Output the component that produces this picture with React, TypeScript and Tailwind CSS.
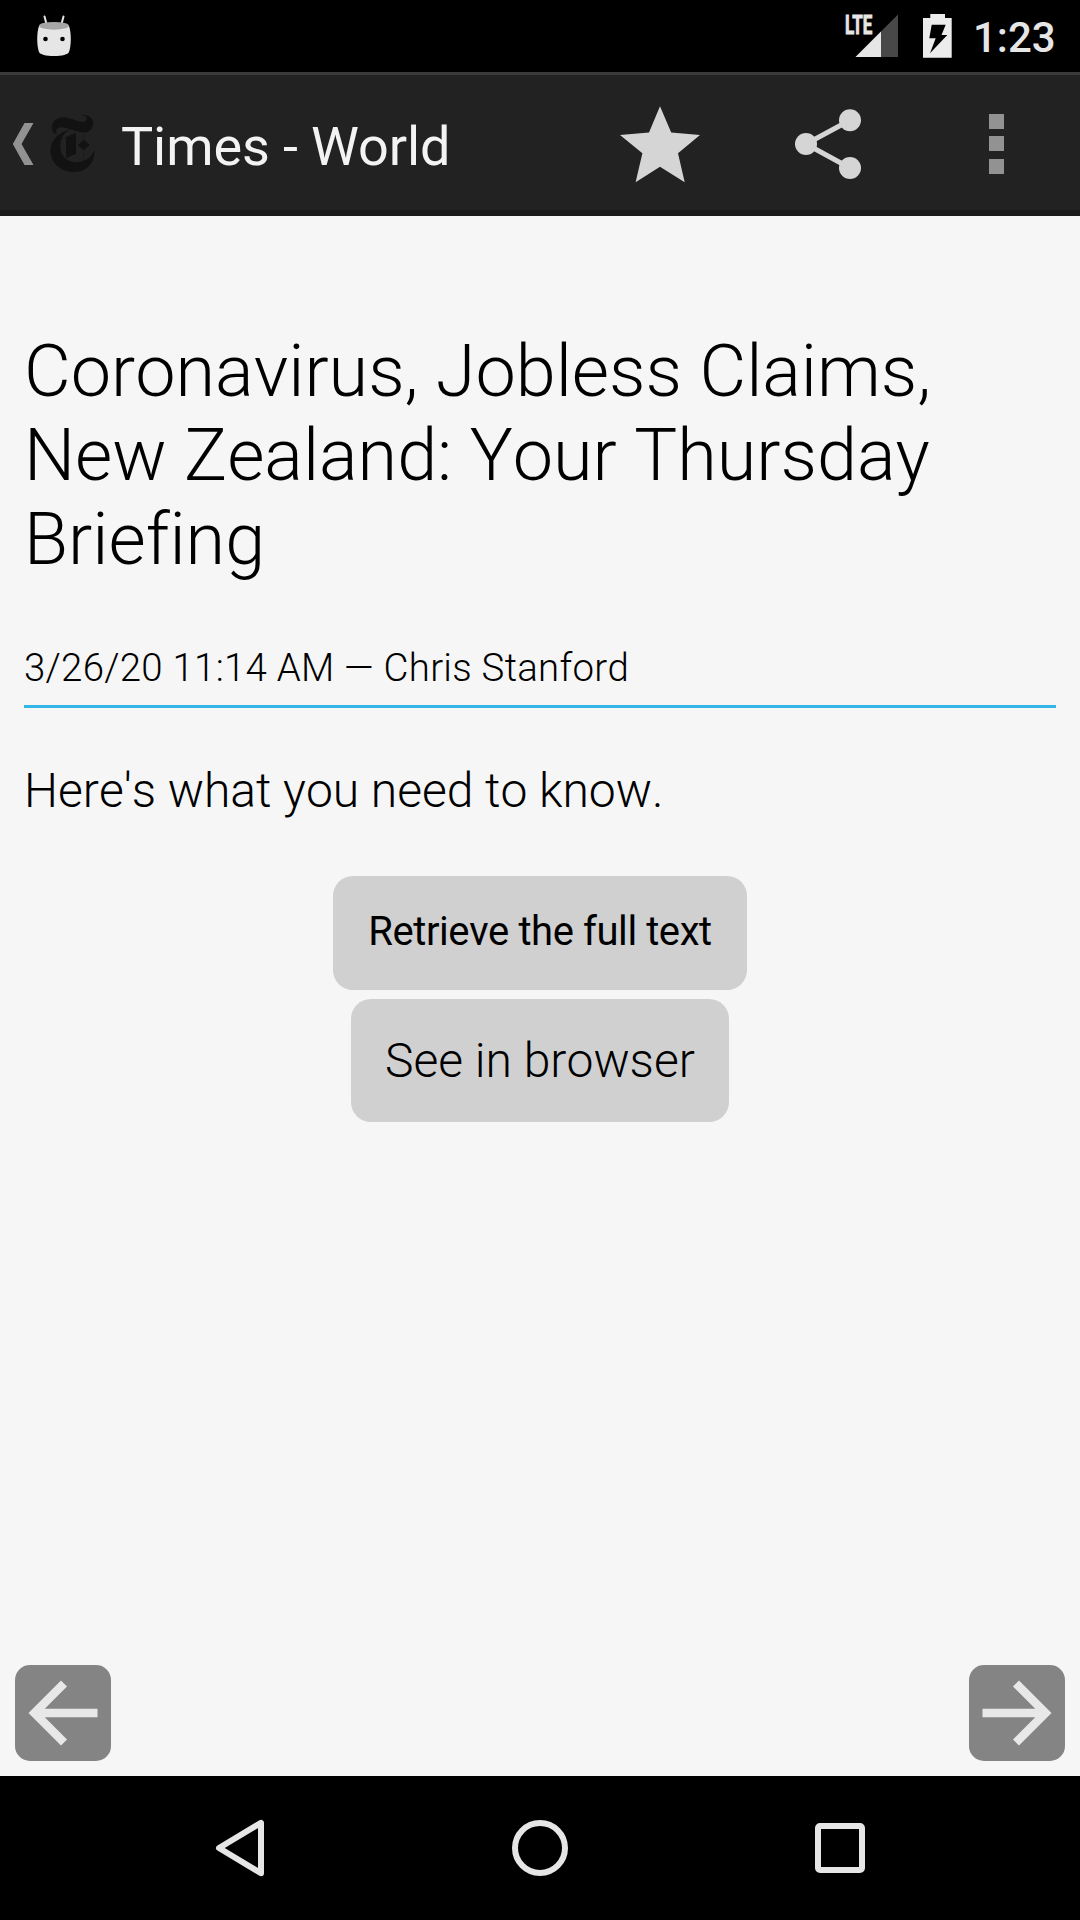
import React from "react";
import { SiNewyorktimes } from "react-icons/si";

function StatusBar() {
  return (
    <div className="flex h-[72px] items-center bg-black">
      <svg className="ml-9 h-[42px] w-9" viewBox="36 12 36 42">
        <path d="M44.5 13.5L46.5 21M63.5 13.5L61.5 21" stroke="#e6e6e6" strokeWidth="2" strokeLinecap="round" />
        <path d="M39 23C36.6 30 36.6 42 39 49C40 51.5 46 53 54 53C62 53 68 51.5 69 49C71.4 42 71.4 30 69 23Z" fill="#e6e6e6" />
        <ellipse cx="54" cy="22.8" rx="15" ry="3.9" fill="#a6a6a6" />
        <circle cx="45.5" cy="36" r="2.3" fill="#000" />
        <circle cx="62.5" cy="36" r="2.3" fill="#000" />
      </svg>
      <svg className="ml-auto h-[72px] w-[56px]" viewBox="844 0 56 72">
        <text x="845" y="33.5" fontFamily="Roboto" fontWeight="700" fontSize="26" fill="#e6e6e6" stroke="#e6e6e6" strokeWidth="0.9" textLength="27.4" lengthAdjust="spacingAndGlyphs">LTE</text>
        <path d="M898 14.5V57H855.5Z" fill="#484848" />
        <path d="M881 31.5V57H855.5Z" fill="#e6e6e6" />
      </svg>
      <svg className="ml-[23px] h-[44px] w-[29px]" viewBox="923 14 29 44">
        <path d="M930.3 14H945V18H951.7V57.7H923V18H930.3Z" fill="#ececec" />
        <path d="M931.7 24.7H945.7L941.5 35H947.3L930 53.3L935.7 38.3H929.3Z" fill="#000" />
      </svg>
      <span className="ml-[21px] mr-[25px] w-[82px] whitespace-nowrap pt-1 text-[42px] font-medium leading-[50px] text-[#e6e6e6]">1:23</span>
    </div>
  );
}

function ActionBar() {
  return (
    <header className="flex h-36 items-center border-t-[3px] border-b-[6px] border-t-[#3a3a3a] border-b-[#1a1a1a] bg-[#222222] pt-0.5">
      <svg className="ml-3 h-[42px] w-[22px] shrink-0" viewBox="12 123 22 42">
        <path d="M24.5 123H33.5L21.5 144L33.5 165H24.5L12.8 144Z" fill="#929292" />
      </svg>
      <SiNewyorktimes className="ml-[10px] h-[57px] w-[57px] shrink-0 text-[#121212]" />
      <h1 className="ml-[20px] whitespace-nowrap pt-[7px] text-[54px] leading-[64px] tracking-[-0.1px] text-[#f3f3f3]">Times - World</h1>
      <svg className="ml-auto h-[78px] w-[84px]" viewBox="618 105 84 78">
        <path d="M660 106.3L671.2 132.5L700 135L678 153.3L684.7 182.3L660 166.7L635.6 182.3L642.4 153.3L620 135L649 132.5Z" fill="#d5d5d5" />
      </svg>
      <svg className="ml-[92px] h-[74px] w-[70px]" viewBox="794 107 70 74">
        <path d="M850 120.3L806 144L850 168" fill="none" stroke="#d5d5d5" strokeWidth="5" />
        <circle cx="850" cy="120.3" r="11" fill="#d5d5d5" />
        <circle cx="806" cy="144" r="11" fill="#d5d5d5" />
        <circle cx="850" cy="168" r="11" fill="#d5d5d5" />
      </svg>
      <div className="ml-[125px] mr-[76px] flex h-[60px] w-[15px] flex-col justify-between">
        <i className="h-[15px] bg-[#929292]" />
        <i className="h-[15px] bg-[#929292]" />
        <i className="h-[15px] bg-[#929292]" />
      </div>
    </header>
  );
}

function ArrowButton({ flipped = false }: { flipped?: boolean }) {
  return (
    <button className="size-24 rounded-[15px] bg-[#848484]">
      <svg className={flipped ? "size-24 -scale-x-100" : "size-24"} viewBox="0 0 96 96">
        <path d="M82.5 48H20M49 18.5L19.5 48L49 77.5" fill="none" stroke="#e8e8e8" strokeWidth="8.5" />
      </svg>
    </button>
  );
}

function NavigationBar() {
  return (
    <nav className="flex h-36 items-center bg-black">
      <svg className="ml-[215px] h-[58px] w-[50px]" viewBox="215 1819 50 58">
        <path d="M261 1822.8V1873.2L219 1848Z" fill="none" stroke="#e6e6e6" strokeWidth="6" strokeLinejoin="round" />
      </svg>
      <i className="ml-[247px] size-14 rounded-full border-[6px] border-[#e6e6e6]" />
      <i className="ml-[247px] size-[50px] rounded-[5px] border-[6px] border-[#e6e6e6]" />
    </nav>
  );
}

export default function App() {
  return (
    <div className="flex h-[1920px] w-[1080px] flex-col overflow-hidden bg-[#f6f6f6] font-['Roboto',sans-serif] text-black">
      <StatusBar />
      <ActionBar />
      <main className="flex flex-1 flex-col px-6 pt-[114px] font-light [font-kerning:none] [font-variant-ligatures:none]">
        <h2 className="text-[72px] leading-[84px] tracking-[-0.04px]">
          Coronavirus, Jobless Claims,<br />New Zealand: Your Thursday<br />Briefing
        </h2>
        <p className="mt-[63px] h-[63px] border-b-[3px] border-[#33b5e5] text-[38.4px] leading-[45px] tracking-[0.27px]">3/26/20 11:14 AM — Chris Stanford</p>
        <p className="mt-[55px] text-[48px] leading-[56px] tracking-[-0.03px]">Here's what you need to know.</p>
        <div className="mt-[57px] flex flex-col items-center gap-[9px]">
          <button className="h-[114px] w-[414px] rounded-[20px] bg-[#d0d0d0] pb-0.5 text-[40px] font-normal tracking-[-0.42px]">Retrieve the full text</button>
          <button className="h-[123px] w-[378px] rounded-[20px] bg-[#d0d0d0] text-[48px]">See in browser</button>
        </div>
        <div className="-mx-[9px] mb-[15px] mt-auto flex justify-between">
          <ArrowButton />
          <ArrowButton flipped />
        </div>
      </main>
      <NavigationBar />
    </div>
  );
}
